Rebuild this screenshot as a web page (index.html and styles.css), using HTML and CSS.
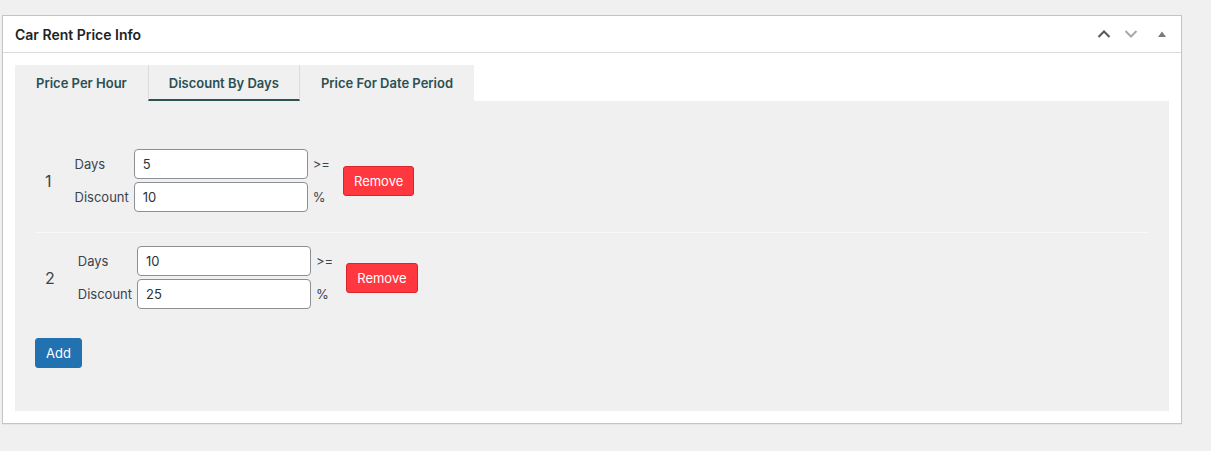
FILE: index.html
```html
<!DOCTYPE html>
<html lang="en">
<head>
<meta charset="utf-8">
<title>Car Rent Price Info</title>
<link rel="stylesheet" href="styles.css">
</head>
<body>
<div class="postbox">
  <div class="postbox-header">
    <h2 class="postbox-title">Car Rent Price Info</h2>
    <div class="handle-actions">
      <svg class="ico ico-up" width="14" height="10" viewBox="0 0 14 10"><path d="M1.5 8 L7 2.5 L12.5 8" fill="none" stroke="currentColor" stroke-width="2"/></svg>
      <svg class="ico ico-down" width="14" height="10" viewBox="0 0 14 10"><path d="M1.5 2 L7 7.5 L12.5 2" fill="none" stroke="currentColor" stroke-width="2"/></svg>
      <svg class="ico ico-tri" width="10" height="8" viewBox="0 0 10 8"><path d="M1 7 L5 1.5 L9 7 Z" fill="currentColor"/></svg>
    </div>
  </div>
  <div class="inside">
    <div class="tabs">
      <div class="tab">Price Per Hour</div>
      <div class="tab active">Discount By Days</div>
      <div class="tab">Price For Date Period</div>
    </div>
    <div class="panel">
      <div class="rows">
        <div class="row">
          <div class="num">1</div>
          <div class="fields">
            <label class="lbl">Days</label>
            <input class="inp" type="text" value="5">
            <span class="suffix">&gt;=</span>
            <label class="lbl">Discount</label>
            <input class="inp" type="text" value="10">
            <span class="suffix">%</span>
          </div>
          <button class="btn-remove">Remove</button>
        </div>
        <div class="row">
          <div class="num">2</div>
          <div class="fields">
            <label class="lbl">Days</label>
            <input class="inp" type="text" value="10">
            <span class="suffix">&gt;=</span>
            <label class="lbl">Discount</label>
            <input class="inp" type="text" value="25">
            <span class="suffix">%</span>
          </div>
          <button class="btn-remove">Remove</button>
        </div>
      </div>
      <button class="btn-add">Add</button>
    </div>
  </div>
</div>
</body>
</html>
```
FILE: styles.css
```css
* { box-sizing: border-box; }
html, body { margin: 0; padding: 0; }
body {
  background: #f0f0f1;
  font-family: Inter, "Noto Sans", "Liberation Sans", sans-serif;
  font-size: 13px;
  color: #3c434a;
  width: 1211px;
  height: 451px;
  overflow: hidden;
}
.postbox {
  margin: 15px 0 0 2px;
  width: 1180px;
  background: #fff;
  border: 1px solid #c3c4c7;
  box-shadow: 0 1px 1px rgba(0,0,0,0.04);
}
.postbox-header {
  height: 37px;
  border-bottom: 1px solid #dcdcde;
  display: flex;
  align-items: center;
  justify-content: space-between;
  padding: 0 0 0 12px;
}
.postbox-title {
  margin: 0;
  font-size: 14px;
  font-weight: 600;
  color: #1d2327;
}
.handle-actions {
  display: flex;
  align-items: center;
  padding-right: 14px;
}
.ico { display: block; }
.ico-up { color: #50575e; margin-right: 13px; }
.ico-down { color: #a7aaad; margin-right: 19px; }
.ico-tri { color: #787c82; }
.inside {
  padding: 12px;
}
.tabs {
  display: flex;
  height: 36px;
}
.tab {
  background: #f0f0f1;
  padding: 0 20px;
  display: flex;
  align-items: center;
  font-weight: 600;
  font-size: 13px;
  color: #2c4f52;
  border-left: 1px solid transparent;
  border-right: 1px solid transparent;
}
.tab.active {
  border-left-color: #dcdcde;
  border-right-color: #dcdcde;
  border-bottom: 2px solid #2a5352;
  padding-top: 2px;
}
.panel {
  background: #f0f0f1;
  padding: 20px;
  height: 310px;
}
.rows {
  margin-top: 15px;
}
.row {
  display: flex;
  align-items: center;
  padding: 13px 10px 20px 10px;
}
.row + .row {
  border-top: 1px solid #f8f8f8;
}
.num {
  font-size: 16px;
  color: #3c434a;
  padding-right: 23px;
}
.fields {
  display: grid;
  grid-template-columns: auto 174px auto;
  row-gap: 3px;
  align-items: center;
}
.lbl {
  padding-right: 5px;
  color: #3c434a;
}
.inp {
  width: 174px;
  height: 30px;
  border: 1px solid #8c8f94;
  border-radius: 4px;
  background: #fff;
  font-family: inherit;
  font-size: 13px;
  color: #2c3338;
  padding: 0 8px;
  margin: 0;
}
.suffix {
  padding-left: 5px;
  color: #3c434a;
  font-size: 13px;
}
.btn-remove {
  margin-left: 13px;
  height: 30px;
  padding: 0 10px;
  background: #ff373f;
  border: 1px solid #d9242c;
  border-radius: 3px;
  color: #fff;
  font-family: inherit;
  font-size: 13px;
}
.btn-add {
  margin-top: 9px;
  height: 30px;
  padding: 0 10px;
  background: #2271b1;
  border: 1px solid #2271b1;
  border-radius: 3px;
  color: #fff;
  font-family: inherit;
  font-size: 13px;
}
```
